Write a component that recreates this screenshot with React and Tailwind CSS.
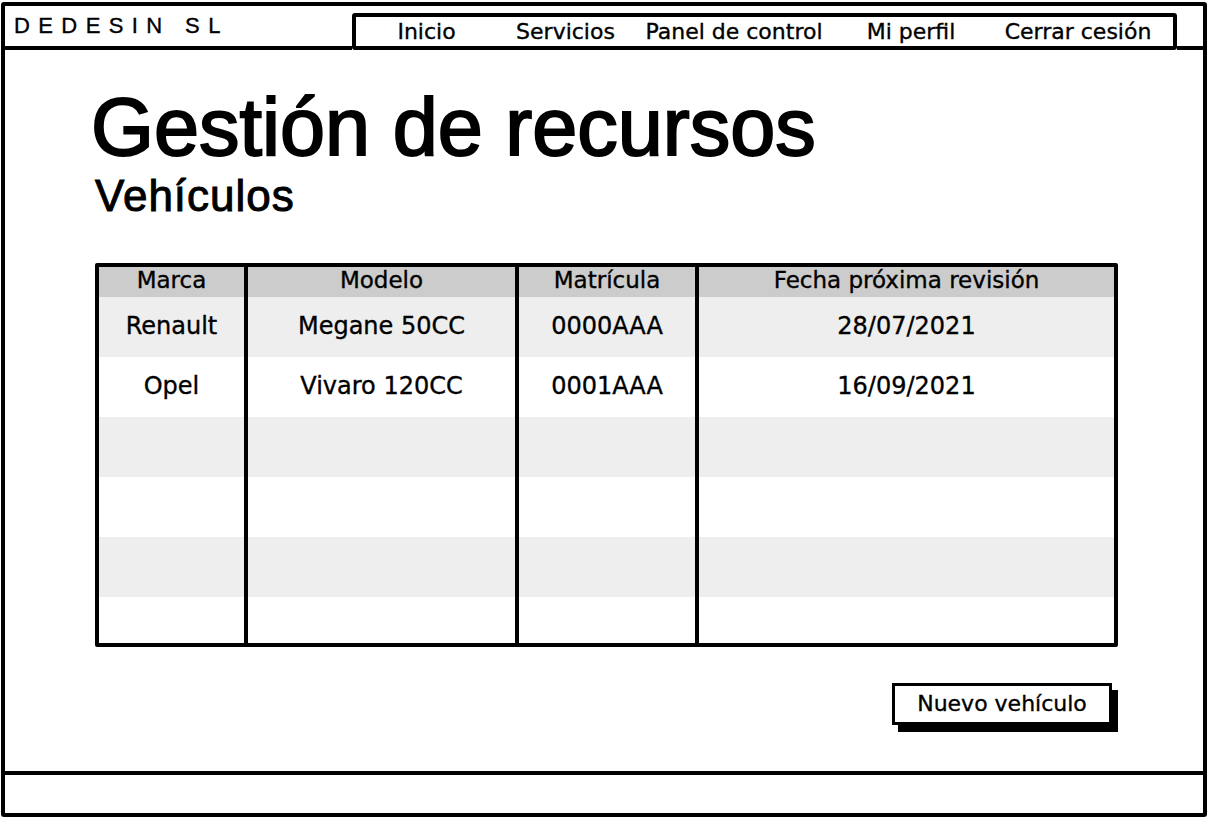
import React from 'react';

const navItems = [
  { label: 'Inicio', w: 'w-[123px]' },
  { label: 'Servicios', w: 'w-[155px]' },
  { label: 'Panel de control', w: 'w-[182px]' },
  { label: 'Mi perfil', w: 'w-[172px]' },
  { label: 'Cerrar cesión', w: 'w-[162px]' },
];

const vehicles = [
  ['Renault', 'Megane 50CC', '0000AAA', '28/07/2021'],
  ['Opel', 'Vivaro 120CC', '0001AAA', '16/09/2021'],
  ['', '', '', ''],
  ['', '', '', ''],
  ['', '', '', ''],
];

const cols = ['w-[145px]', 'w-[271px] border-l-[4px]', 'w-[180px] border-l-[4px]', 'w-[419px] border-l-[4px]'];

function App() {
  return (
    <div className="w-[1210px] h-[820px] bg-white pt-[2px] pl-[1px] text-black [-webkit-text-stroke:0.35px_black]" style={{ fontFamily: '"DejaVu Sans", sans-serif' }}>
      <div className="w-[1206px] h-[815px] border-[4px] border-black rounded-[3px] flex flex-col">
        {/* header */}
        <div className="flex items-end h-[44px]">
          <div className="w-[347px] h-full border-b-[4px] border-black flex items-center pl-[9px]">
            <span
              className="text-[22px] tracking-[8.4px] leading-none"
              style={{ fontFamily: '"Liberation Sans", sans-serif' }}
            >
              DEDESIN SL
            </span>
          </div>
          <nav className="w-[825px] h-[37px] border-[4px] border-black rounded-[3px] flex items-center pl-[9px] text-[22px] leading-none">
            {navItems.map((item) => (
              <span key={item.label} className={`${item.w} text-center`}>
                {item.label}
              </span>
            ))}
          </nav>
          <div className="flex-1 h-full border-b-[4px] border-black" />
        </div>

        {/* main */}
        <div className="flex-1 flex flex-col pt-[37px]">
          <h1
            className="pl-[86px] text-[81px] leading-none [-webkit-text-stroke:2px_black]"
            style={{ fontFamily: '"Liberation Sans", sans-serif' }}
          >
            Gestión de recursos
          </h1>
          <h2
            className="pl-[90px] mt-[6px] text-[44px] leading-none tracking-[1px] [-webkit-text-stroke:1px_black]"
            style={{ fontFamily: '"Liberation Sans", sans-serif' }}
          >
            Vehículos
          </h2>

          <div className="ml-[90px] mt-[45px] w-[1023px] border-[4px] border-black rounded-[2px]">
            <div className="flex h-[30px] bg-[#cccccc] text-[23px] leading-none">
              {['Marca', 'Modelo', 'Matrícula', 'Fecha próxima revisión'].map((h, i) => (
                <div key={h} className={`${cols[i]} border-black flex items-center justify-center pb-[3px]`}>
                  {h}
                </div>
              ))}
            </div>
            {vehicles.map((row, r) => (
              <div key={r} className={`flex h-[60px] text-[24px] leading-none ${r % 2 === 0 ? 'bg-[#eeeeee]' : 'bg-white'}`}>
                {row.map((cell, i) => (
                  <div key={i} className={`${cols[i]} border-black flex items-center justify-center pb-[2px]`}>
                    {cell}
                  </div>
                ))}
              </div>
            ))}
            <div className="flex h-[46px] bg-white">
              {cols.map((c, i) => (
                <div key={i} className={`${c} border-black`} />
              ))}
            </div>
          </div>

          <div className="flex justify-end mr-[91px] mt-[36px]">
            <button className="w-[220px] h-[42px] border-[3px] border-black bg-white shadow-[6px_7px_0_0_#000] text-[22px] leading-none flex items-center justify-center">
              Nuevo vehículo
            </button>
          </div>
        </div>

        {/* footer */}
        <div className="h-[42px] border-t-[4px] border-black" />
      </div>
    </div>
  );
}

export default App;
